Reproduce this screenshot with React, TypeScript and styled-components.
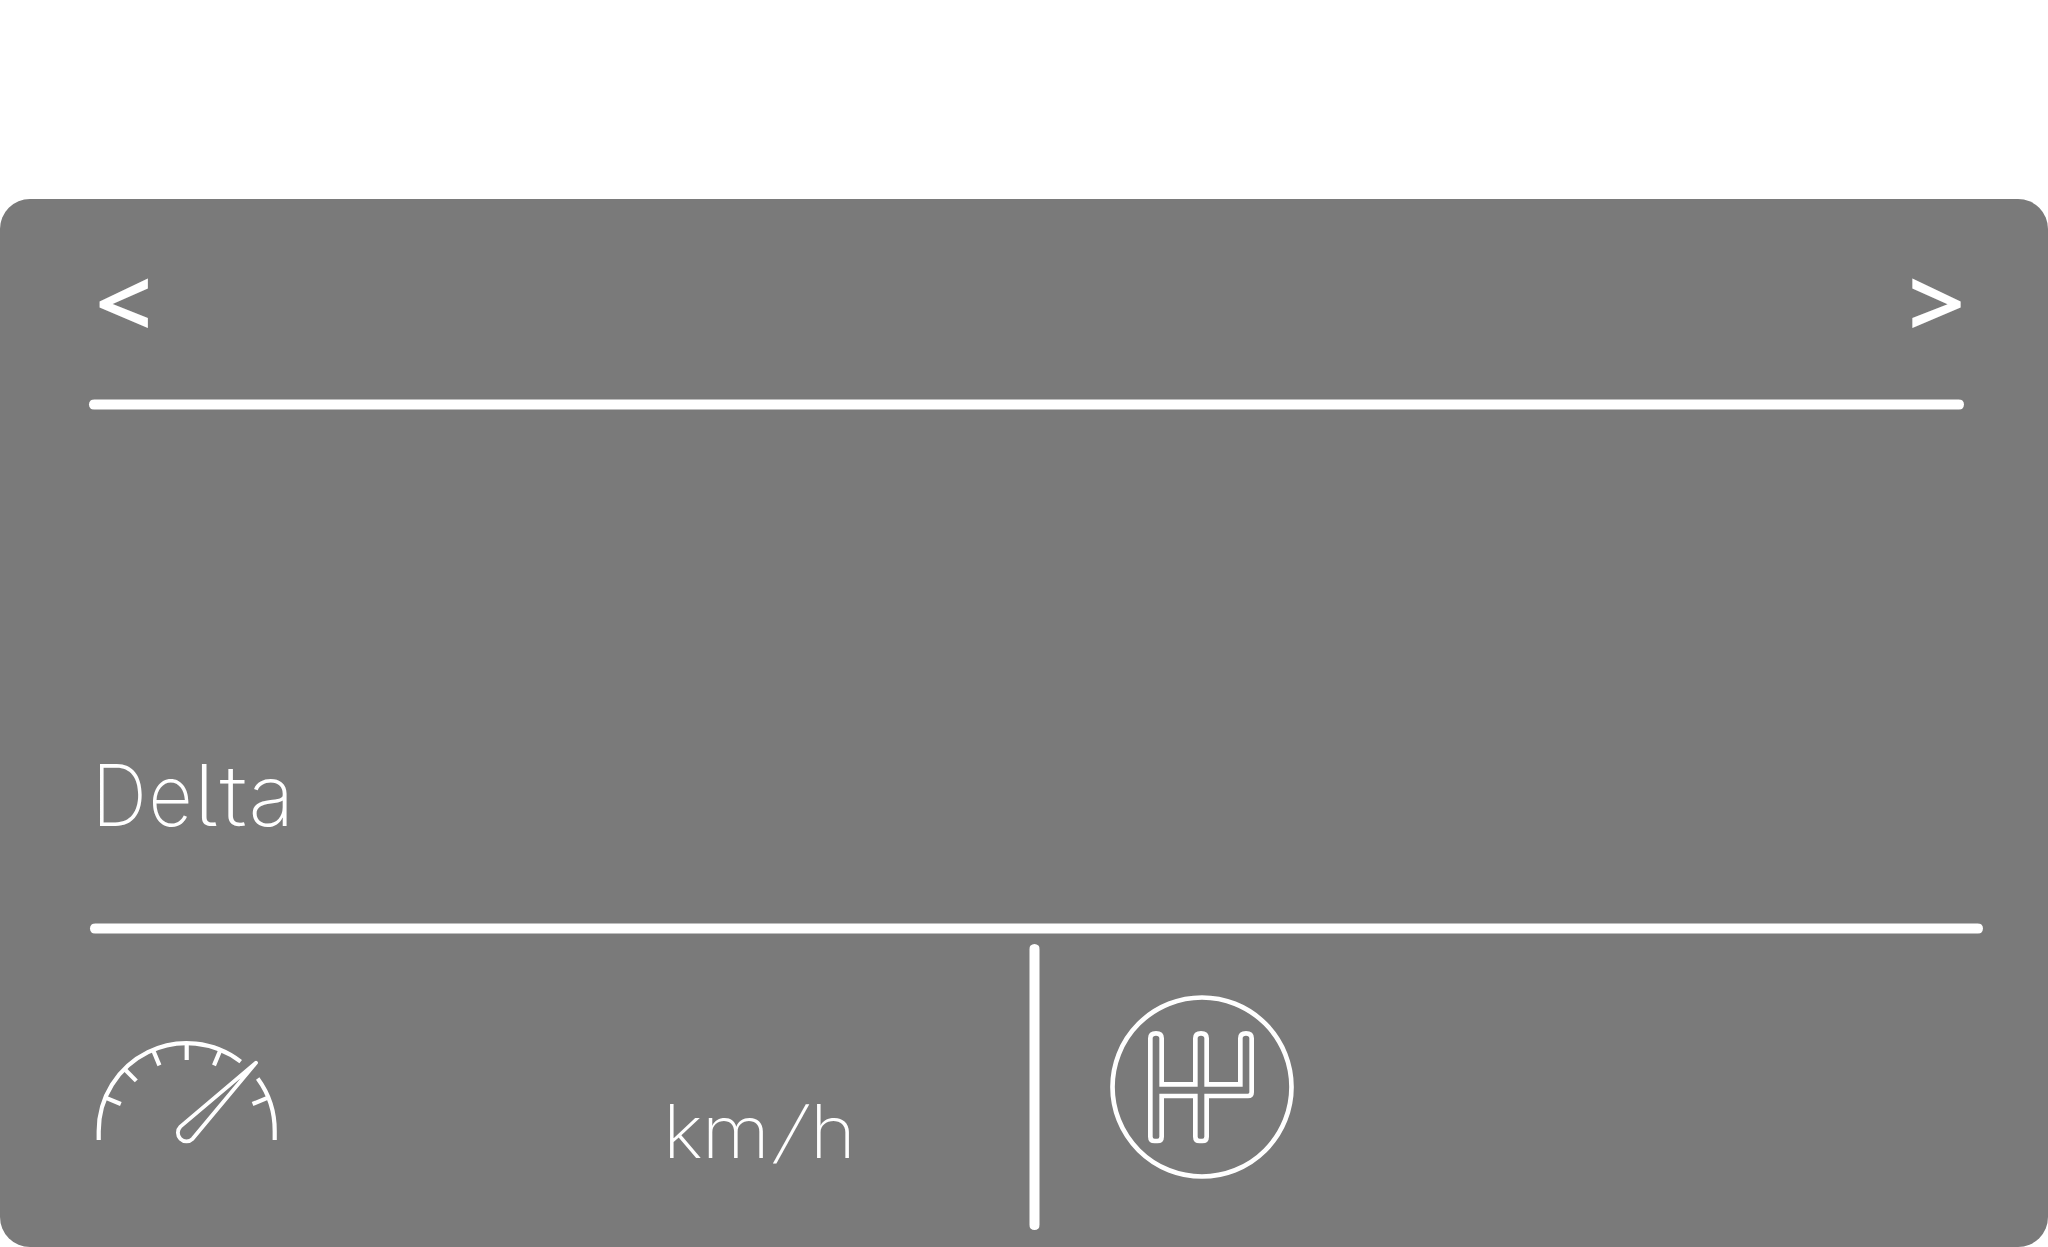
import React from "react";
import styled, { createGlobalStyle } from "styled-components";

const GlobalStyle = createGlobalStyle`
  *, *::before, *::after { box-sizing: border-box; }
  body { margin: 0; background: #ffffff; }
`;

const Page = styled.main`
  width: 2048px;
  height: 1247px;
  padding-top: 199px;
  overflow: hidden;
`;

const Panel = styled.section`
  display: flex;
  flex-direction: column;
  width: 100%;
  height: 1048px;
  border-radius: 30px;
  background: #7a7a7a;
  color: #ffffff;
`;

const Header = styled.header`
  display: flex;
  justify-content: space-between;
  height: 200px;
  padding: 52px 83px 0 95px;
`;

const NavButton = styled.button<{ $origin: string }>`
  display: block;
  height: 100px;
  padding: 0;
  border: 0;
  background: none;
  color: inherit;
  font: 600 95px/100px "Noto Sans", sans-serif;
  transform: scaleX(1.06);
  transform-origin: ${(p) => p.$origin};
`;

const softEdges = (direction: string) =>
  `linear-gradient(${direction}, rgba(255,255,255,0.5) 1px, #ffffff 1px, #ffffff 10px, rgba(255,255,255,0.5) 10px)`;

const Rule = styled.div<{ $start: number; $length: number }>`
  flex: none;
  width: ${(p) => p.$length}px;
  height: 11px;
  margin-left: ${(p) => p.$start}px;
  border-radius: 5.5px;
  background: ${softEdges("to bottom")};
`;

const DeltaArea = styled.div`
  display: flex;
  align-items: flex-end;
  height: 513px;
  padding: 0 0 77px 91px;
`;

const Label = styled.span<{ $size: number; $spacing: number; $stretch?: number }>`
  display: block;
  font-family: Inter, sans-serif;
  font-size: ${(p) => p.$size}px;
  font-weight: 200;
  font-feature-settings: "cv05" 1;
  line-height: 100px;
  letter-spacing: ${(p) => p.$spacing}px;
  white-space: nowrap;
  transform: scaleX(${(p) => p.$stretch ?? 1});
  transform-origin: left;
`;

const Glyph = styled.span<{ $shape: string; $after?: string }>`
  display: inline-block;
  letter-spacing: ${(p) => p.$after ?? "inherit"};
  transform: ${(p) => p.$shape};
`;

const Footer = styled.footer`
  display: grid;
  grid-template-columns: 1029px 11px 1fr;
  flex: 1;
  padding-top: 10px;
`;

const SpeedCell = styled.div`
  display: flex;
  align-items: flex-start;
  padding: 76px 0 0 80px;
`;

const Unit = styled.div`
  margin: 61px 0 0 363px;
`;

const Divider = styled.div`
  height: 286px;
  border-radius: 5.5px;
  background: ${softEdges("to right")};
`;

const GearCell = styled.div`
  padding: 36px 0 0 50px;
`;

const Icon = styled.svg`
  display: block;
  flex: none;
  fill: none;
  stroke: #ffffff;
`;

const TICKS = [-67.5, -45, -22.5, 0, 22.5, 67.5];

function SpeedIcon() {
  return (
    <Icon width="220" height="140" viewBox="0 0 220 140" strokeWidth="4.2">
      <path d="M18.7 120V111.3A88 88 0 0 1 160.7 41.7" />
      <path d="M177.7 58.6A88 88 0 0 1 194.7 111.3V120" />
      {TICKS.map((a) => (
        <path key={a} d="M106.7 23.3V40" transform={`rotate(${a} 106.7 111.3)`} />
      ))}
      <path d="M176 42.8L100.4 106.6A8.5 8.5 0 0 0 112.6 118.8Z" strokeWidth="3.8" strokeLinejoin="round" />
    </Icon>
  );
}

function GearIcon() {
  return (
    <Icon width="220" height="220" viewBox="0 0 660 660" strokeWidth="14">
      <circle cx="336" cy="321" r="268.5" strokeWidth="14" />
      <path d="M181 175Q181 160 198 160Q215 160 215 175V313H316V175Q316 160 333 160Q350 160 350 175V313H451V175Q451 160 468 160Q485 160 485 175V337Q485 348 474 348H350V470Q350 483 337 483H329Q316 483 316 470V348H215V470Q215 483 202 483H194Q181 483 181 470Z" />
    </Icon>
  );
}

export default function App() {
  return (
    <>
      <GlobalStyle />
      <Page>
        <Panel>
          <Header>
            <NavButton $origin="left">&lt;</NavButton>
            <NavButton $origin="right">&gt;</NavButton>
          </Header>
          <Rule $start={89} $length={1875} />
          <DeltaArea>
            <Label $size={85} $spacing={1}>
              <Glyph $shape="translateX(-2px) scaleX(0.9)">D</Glyph>
              <Glyph $shape="translateX(-7px) scaleX(0.9)">e</Glyph>
              <Glyph $shape="translateX(-8px) scaleX(1.2)">l</Glyph>
              <Glyph $shape="translateX(-3px) scaleX(1.2)">t</Glyph>
              <Glyph $shape="none">a</Glyph>
            </Label>
          </DeltaArea>
          <Rule $start={90} $length={1893} />
          <Footer>
            <SpeedCell>
              <SpeedIcon />
              <Unit>
                <Label $size={74} $spacing={4} $stretch={1.06}>
                  <Glyph $shape="none" $after="-1px">k</Glyph>
                  <Glyph $shape="none" $after="8px">m</Glyph>
                  <Glyph $shape="skewX(-13deg) scaleY(0.92)" $after="5px">/</Glyph>
                  h
                </Label>
              </Unit>
            </SpeedCell>
            <Divider />
            <GearCell>
              <GearIcon />
            </GearCell>
          </Footer>
        </Panel>
      </Page>
    </>
  );
}
